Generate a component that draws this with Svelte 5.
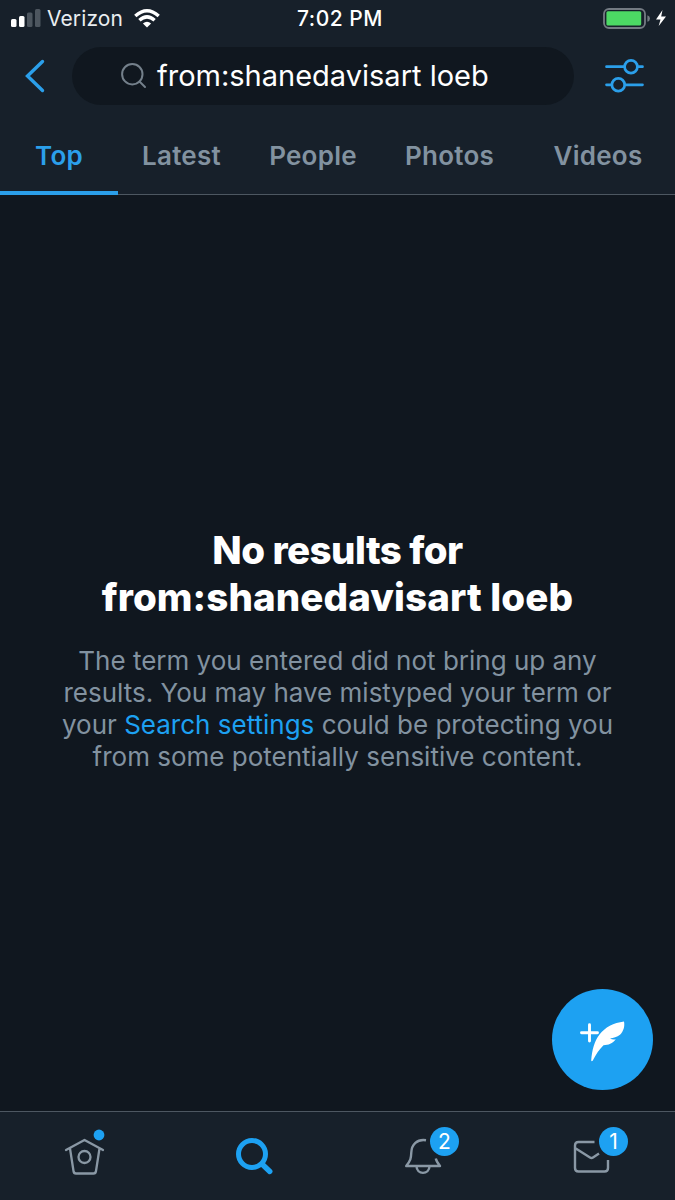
<script lang="ts">
	const query = 'from:shanedavisart loeb';
	const tabs = ['Top', 'Latest', 'People', 'Photos', 'Videos'];
	let active = $state('Top');
</script>

<div class="screen">
	<header>
		<div class="status">
			<svg class="signal" width="30" height="18" viewBox="0 0 30 18">
				<rect x="0" y="9" width="5.5" height="8" rx="1.5" fill="#fff" />
				<rect x="8" y="6" width="5.5" height="11" rx="1.5" fill="#fff" />
				<rect x="16" y="2.5" width="5.5" height="14.5" rx="1.5" fill="#4d565f" />
				<rect x="24" y="-1" width="5.5" height="18" rx="1.5" fill="#4d565f" />
			</svg>
			<span class="carrier">Verizon</span>
			<svg class="wifi" width="26" height="19" viewBox="0 0 26 19" fill="none" stroke="#fff" stroke-width="3.4">
				<path d="M1.3 7Q13-3.6 24.7 7" />
				<path d="M5.4 11.3Q13 4.4 20.6 11.3" />
				<path d="M8.9 14.5Q13 10.8 17.1 14.5L13 18.5Z" fill="#fff" stroke="none" />
			</svg>
			<span class="time">7:02 PM</span>
			<svg class="battery" width="64" height="22" viewBox="0 0 64 22">
				<rect x="1" y="1" width="41" height="19" rx="5" fill="none" stroke="#747b83" stroke-width="1.8" />
				<rect x="3.4" y="3.2" width="34.8" height="14.4" rx="1.5" fill="#4cd964" />
				<path d="M44.4 7.2Q47 8 47 10.5T44.4 13.8Z" fill="#747b83" />
				<path d="M59.5 2L53 11.5H57.5L55.7 18L63 8.6H58.2Z" fill="#fff" />
			</svg>
		</div>
		<div class="search">
			<svg class="back" width="20" height="34" viewBox="0 0 20 34" fill="none" stroke="#2b9fea" stroke-width="3.4">
				<path d="M17.5 2.5L2.5 17L17.5 31.5" stroke-linecap="round" />
			</svg>
			<div class="field">
				<svg width="26" height="26" viewBox="0 0 26 26" fill="none" stroke="#74808b" stroke-width="2">
					<circle cx="11.3" cy="11.2" r="10.2" />
					<path d="M18.5 18.5L24 24" stroke-linecap="round" />
				</svg>
				<span>{query}</span>
			</div>
			<svg class="filters" width="40" height="36" viewBox="0 0 40 36" fill="none" stroke="#2b9fea" stroke-width="2.7" stroke-linecap="round">
				<path d="M1.5 8.7H19M33 8.7H37.5M1.5 26.8H6.5M20 26.8H37.5" />
				<circle cx="26" cy="8.7" r="6.4" />
				<circle cx="13.3" cy="26.8" r="6.4" />
			</svg>
		</div>
		<nav class="tabs">
			{#each tabs as tab (tab)}
				<button class:active={tab == active} onclick={() => (active = tab)}>{tab}</button>
			{/each}
		</nav>
	</header>

	<main>
		<h1>No results for<br /><span>{query}</span></h1>
		<p>
			The term you entered did not bring up any<br />
			results. You may have mistyped your term or<br />
			your <a href="#settings">Search settings</a> could be protecting you<br />
			from some potentially sensitive content.
		</p>
		<button class="compose" aria-label="Compose">
			<svg width="101" height="101" viewBox="0 0 101 101">
				<path d="M29.5 43.8H45.5M37.5 35.8V52" stroke="#fff" stroke-width="2.9" stroke-linecap="round" />
				<path d="M39.2 71.5C40 61 42.5 52 47.5 45.5C53 38.5 61.5 34 72 32.6C73 37.5 71.5 42.5 68 45.8C65 48 61.5 48.9 58 49.6C60 50.5 62 50.6 63.8 50.2C60.5 54.5 56.5 56 51.5 56.2C47.5 60 43.8 65.5 40.8 71.5Q39.8 73 39.2 71.5Z" fill="#fff" />
			</svg>
		</button>
	</main>

	<nav class="bottom">
		<a href="#home" aria-label="Home">
			<svg width="60" height="60" viewBox="0 0 60 60" fill="none" stroke="#8a98a5" stroke-width="2.3" stroke-linecap="round" stroke-linejoin="round">
				<path d="M12 25L30.5 15L49 25M16 23.5L19.5 46Q19.8 48.5 22 48.5H39.5Q41.7 48.5 42 46L45.5 23.5" />
				<circle cx="30.5" cy="32" r="6" />
				<circle cx="45" cy="10" r="5.4" fill="#1da1f2" stroke="none" />
			</svg>
		</a>
		<a href="#search" aria-label="Search">
			<svg width="60" height="60" viewBox="0 0 60 60" fill="none" stroke="#1da1f2" stroke-linecap="round">
				<circle cx="29" cy="29" r="13.5" stroke-width="5" />
				<path d="M40 40L46.8 46.5" stroke-width="5.4" />
			</svg>
		</a>
		<a href="#notifications" aria-label="Notifications">
			<svg width="60" height="60" viewBox="0 0 60 60" fill="none" stroke="#8a98a5" stroke-width="2.4" stroke-linejoin="round">
				<path d="M34 15.2C25 13.8 19.6 19.5 19.3 27.5C19 33.5 18.7 35.5 14.2 41H48C45.6 38 44.3 36 43.8 33.5" />
				<path d="M24.5 41C24.5 50.2 37.5 50.2 37.5 41" />
			</svg>
			<span class="badge">2</span>
		</a>
		<a href="#messages" aria-label="Messages">
			<svg width="60" height="60" viewBox="0 0 60 60" fill="none" stroke="#8a98a5" stroke-width="2.4" stroke-linejoin="round">
				<path d="M33.5 17H17.5Q14 17 14 20.5V43Q14 46.5 17.5 46.5H43.5Q47 46.5 47 43V35M14 23L29 32.5Q30.5 33.5 32 32.5L38 28.5" />
			</svg>
			<span class="badge">1</span>
		</a>
	</nav>
</div>

<style>
	:global(body) {
		background: #10171f;
	}
	.screen {
		display: flex;
		flex-direction: column;
		width: 675px;
		height: 1200px;
		overflow: hidden;
		font-family: Inter, Roboto, sans-serif;
		color: #fff;
	}
	svg {
		display: block;
		flex: none;
		overflow: visible;
	}
	button {
		border: 0;
		padding: 0;
		background: none;
		font: inherit;
	}
	header {
		box-sizing: border-box;
		height: 195px;
		background: #17202a;
		border-bottom: 1px solid #4d5761;
	}
	.status {
		box-sizing: border-box;
		display: flex;
		align-items: center;
		height: 36px;
		padding: 1px 0 0 11px;
		font-size: 21px;
		line-height: 35px;
	}
	.carrier {
		width: 76px;
		margin-left: 6px;
		color: #e9edf0;
		letter-spacing: 0.1px;
	}
	.wifi {
		margin-left: 11px;
	}
	.time {
		width: 88px;
		margin-left: 137px;
		font-weight: 500;
		letter-spacing: 0.5px;
		white-space: nowrap;
	}
	.battery {
		margin-left: 218px;
	}
	.search {
		display: flex;
		align-items: center;
		height: 80px;
		padding-left: 25px;
	}
	.field {
		box-sizing: border-box;
		display: flex;
		align-items: center;
		gap: 10px;
		width: 502px;
		height: 58px;
		margin: 0 31px 0 27px;
		padding: 0 0 1px 49px;
		border-radius: 29px;
		background: #10171f;
		font-size: 29px;
		white-space: nowrap;
	}
	.tabs {
		display: grid;
		grid-template-columns: 118px 127px 136px 137px 160px;
		height: 79px;
	}
	.tabs button {
		box-sizing: border-box;
		padding-top: 4px;
		border-bottom: 4px solid transparent;
		color: #8292a0;
		font-size: 26px;
		font-weight: 600;
		letter-spacing: 0.25px;
	}
	.tabs button.active {
		border-color: #2b9fea;
		color: #2b9fea;
	}
	main {
		position: relative;
		flex: 1;
		padding-top: 332px;
		background: #10171f;
		text-align: center;
		white-space: nowrap;
	}
	h1 {
		margin: 0;
		font-size: 38.5px;
		font-weight: 800;
		line-height: 47px;
		letter-spacing: -0.55px;
	}
	h1 span {
		letter-spacing: 0.1px;
	}
	p {
		margin: 23.6px 0 0;
		color: #8292a0;
		font-size: 26px;
		line-height: 32.3px;
	}
	p a {
		color: #1da1f2;
		text-decoration: none;
	}
	.compose {
		position: absolute;
		right: 22px;
		bottom: 21px;
		width: 101px;
		height: 101px;
		border-radius: 50%;
		background: #1da1f2;
	}
	.bottom {
		box-sizing: border-box;
		display: grid;
		grid-template-columns: repeat(4, 169px);
		height: 89px;
		border-top: 1px solid #4d5761;
		background: #17202a;
	}
	.bottom a {
		position: relative;
		padding: 13px 0 0 54px;
		color: #fff;
		text-decoration: none;
	}
	.badge {
		position: absolute;
		left: 92px;
		top: 15px;
		width: 29px;
		height: 29px;
		border-radius: 50%;
		background: #1da1f2;
		font-size: 21px;
		line-height: 29px;
		text-align: center;
	}
</style>
